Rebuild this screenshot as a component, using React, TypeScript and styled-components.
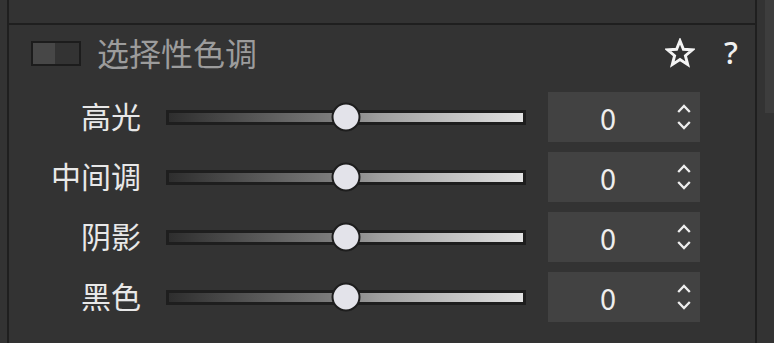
import React from "react";
import styled, { createGlobalStyle } from "styled-components";

const Global = createGlobalStyle`
  html, body { margin: 0; padding: 0; background: #333333; }
  body { font-family: "Noto Sans CJK SC", "Noto Sans", sans-serif; }
`;

const Page = styled.div`
  display: flex;
  width: 774px;
  height: 343px;
  background: #333333;
  overflow: hidden;
`;

const Gutter = styled.div`
  width: 7px;
  flex: none;
`;

const Panel = styled.div`
  width: 746px;
  flex: none;
  border-left: 2px solid #1f1f1f;
  border-right: 2px solid #1f1f1f;
  display: flex;
  flex-direction: column;
`;

const TopStrip = styled.div`
  height: 23px;
  border-bottom: 2px solid #1f1f1f;
`;

const Header = styled.div`
  height: 56px;
  display: flex;
  align-items: center;
  padding: 0 12px 0 22px;
`;

const Toggle = styled.div`
  width: 46px;
  height: 21px;
  border: 2px solid #1c1c1c;
  display: flex;
  margin-right: 16px;
`;

const ToggleKnob = styled.div`
  width: 22px;
  background: #474747;
`;

const Title = styled.div`
  font-size: 32px;
  color: #9c9c9c;
  line-height: 1;
  flex: 1;
  padding-bottom: 2px;
`;

const IconBtn = styled.div<{ $w: number; $gap?: number }>`
  width: ${(p) => p.$w}px;
  margin-left: ${(p) => p.$gap ?? 0}px;
  display: flex;
  justify-content: center;
  align-items: center;
  color: #f2f2f2;
`;

const Help = styled.span`
  font-family: "Noto Sans", sans-serif;
  font-size: 31px;
  font-weight: 500;
  color: #f0f0f0;
  line-height: 1;
  padding-bottom: 2px;
`;

const Rows = styled.div`
  padding-top: 11px;
  display: flex;
  flex-direction: column;
  gap: 10px;
`;

const Row = styled.div`
  height: 50px;
  display: flex;
  align-items: center;
`;

const Label = styled.div`
  width: 132px;
  text-align: right;
  font-size: 30px;
  line-height: 1;
  color: #e8e8e8;
  flex: none;
  padding-bottom: 5px;
`;

const Track = styled.div`
  position: relative;
  margin-left: 25px;
  width: 354px;
  height: 9px;
  border: 3px solid #1e1e1e;
  background: linear-gradient(to right, #2e2e2e, #7a7a7a 45%, #a0a0a0 60%, #e2e2e2);
  flex: none;
`;

const Thumb = styled.div`
  position: absolute;
  top: 50%;
  width: 25px;
  height: 25px;
  border-radius: 50%;
  background: #e3e3ea;
  border: 2px solid #1e1e1e;
  transform: translate(-50%, -50%);
`;

const NumBox = styled.div`
  margin-left: 22px;
  width: 152px;
  height: 50px;
  background: #424242;
  display: flex;
  align-items: center;
  flex: none;
`;

const NumValue = styled.div`
  flex: 1;
  text-align: center;
  font-size: 29px;
  color: #eeeeee;
  line-height: 1;
`;

const Spinner = styled.div`
  width: 32px;
  display: flex;
  flex-direction: column;
  align-items: center;
  gap: 8px;
`;

const Side = styled.div`
  flex: 1;
  display: flex;
  justify-content: flex-end;
`;

const Scrollbar = styled.div`
  width: 9px;
  height: 113px;
  background: #3d3d3d;
`;

const Chevron = ({ up }: { up?: boolean }) => (
  <svg width="14" height="9" viewBox="0 0 14 9">
    <path
      d={up ? "M1.2 8 L7 2 L12.8 8" : "M1.2 1 L7 7 L12.8 1"}
      fill="none"
      stroke="#eeeeee"
      strokeWidth="2.3"
    />
  </svg>
);

const Star = () => (
  <svg width="30" height="30" viewBox="0 0 30 30">
    <polygon
      points="15,2.8 18.4,11.3 27.4,11.8 20.4,17.7 22.7,26.6 15,21.6 7.3,26.6 9.6,17.7 2.6,11.8 11.6,11.3"
      fill="none"
      stroke="#f4f4f4"
      strokeWidth="2.9"
      strokeLinejoin="miter"
    />
  </svg>
);

const rows = [
  { label: "高光", value: 0 },
  { label: "中间调", value: 0 },
  { label: "阴影", value: 0 },
  { label: "黑色", value: 0 },
];

export default function App() {
  return (
    <>
      <Global />
      <Page>
        <Gutter />
        <Panel>
          <TopStrip />
          <Header>
            <Toggle>
              <ToggleKnob />
            </Toggle>
            <Title>选择性色调</Title>
            <IconBtn $w={30}>
              <Star />
            </IconBtn>
            <IconBtn $w={24} $gap={24}>
              <Help>?</Help>
            </IconBtn>
          </Header>
          <Rows>
            {rows.map((r) => (
              <Row key={r.label}>
                <Label>{r.label}</Label>
                <Track>
                  <Thumb style={{ left: `${50 + r.value / 2}%` }} />
                </Track>
                <NumBox>
                  <NumValue>{r.value}</NumValue>
                  <Spinner>
                    <Chevron up />
                    <Chevron />
                  </Spinner>
                </NumBox>
              </Row>
            ))}
          </Rows>
        </Panel>
        <Side>
          <Scrollbar />
        </Side>
      </Page>
    </>
  );
}
